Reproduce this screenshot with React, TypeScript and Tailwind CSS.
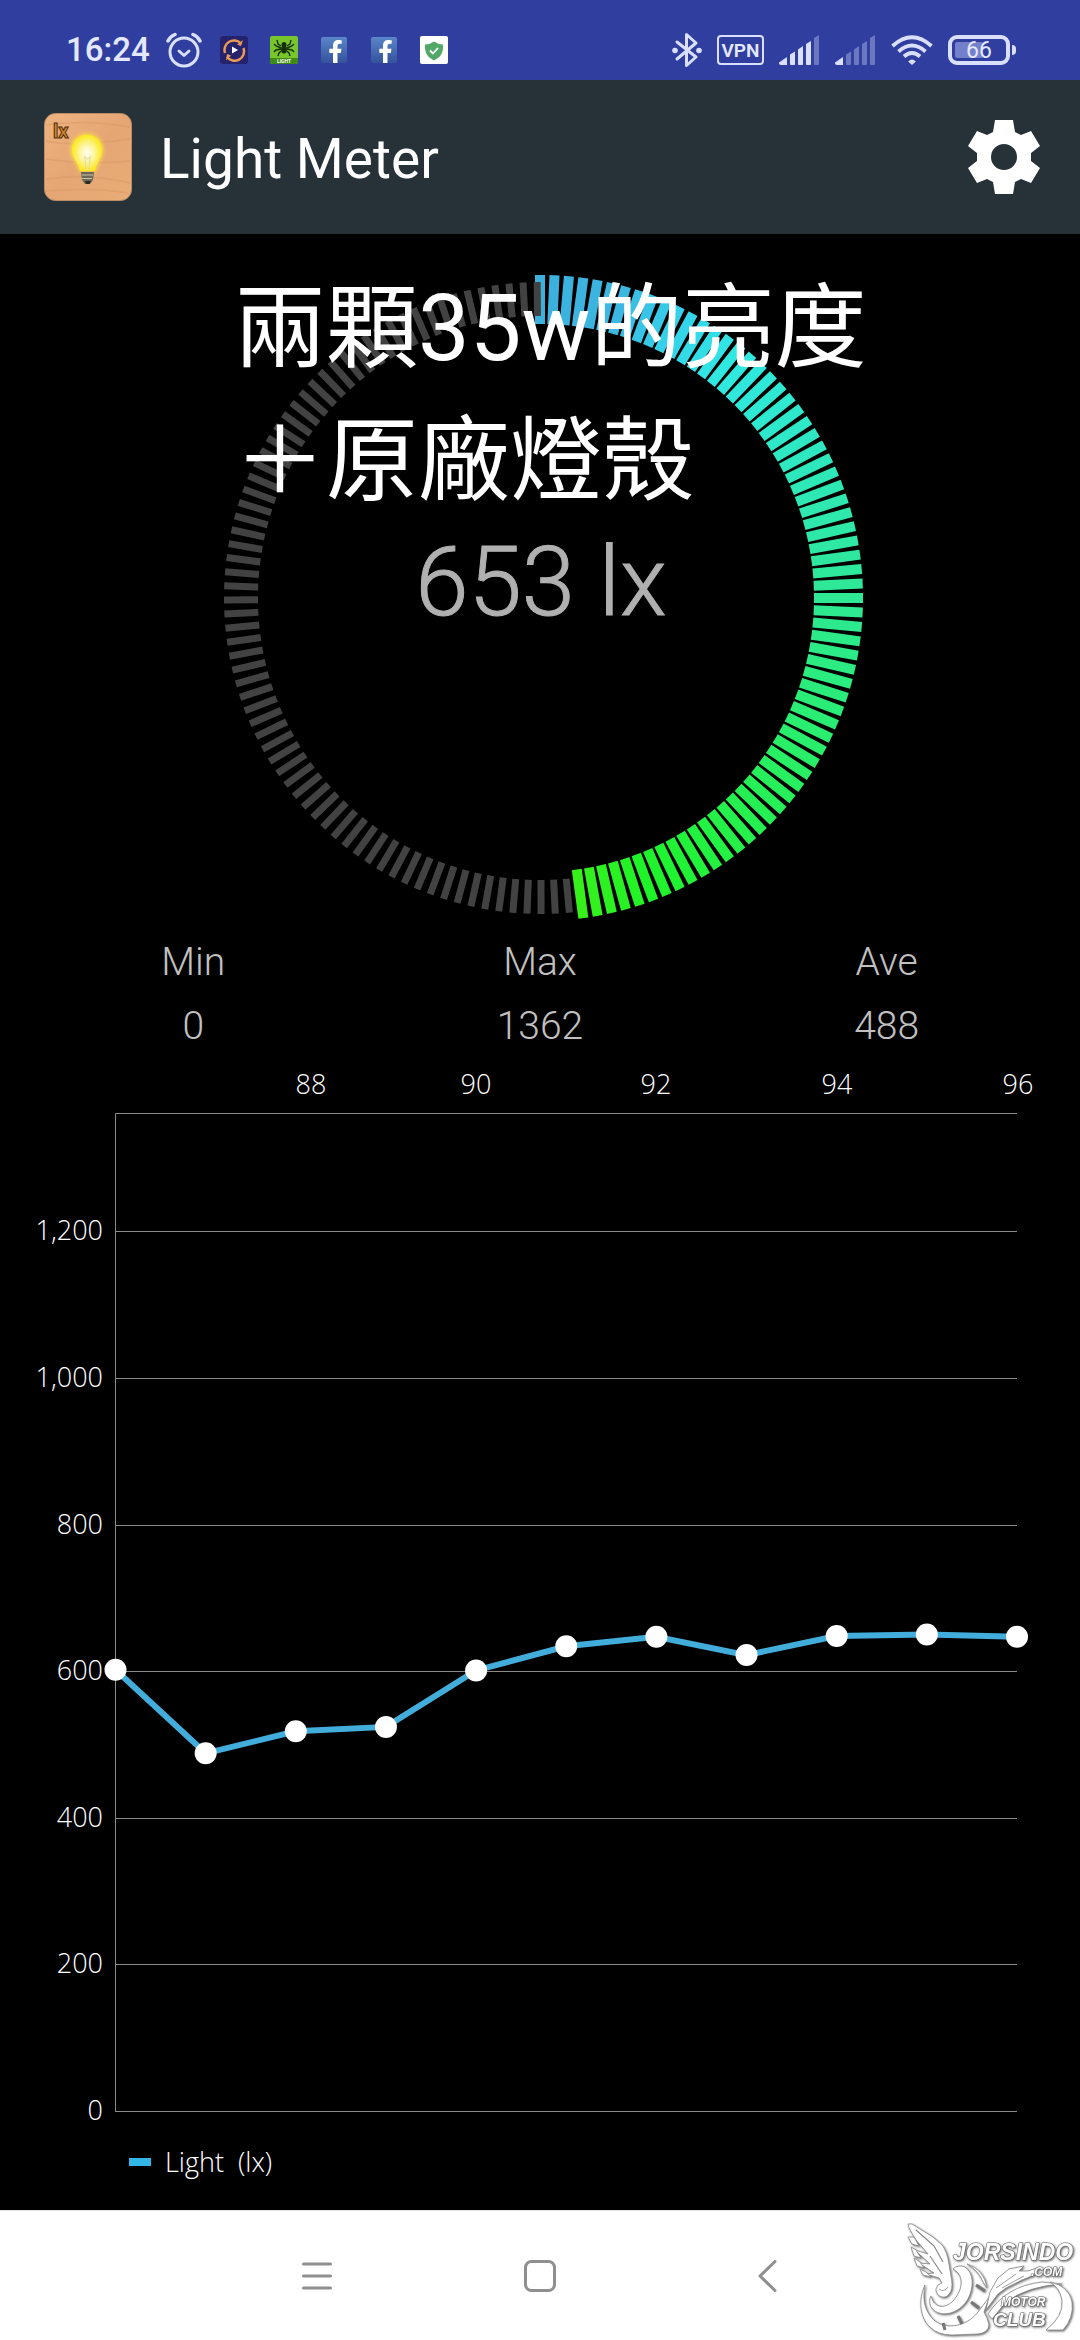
import React from 'react';
import { FaFacebookF } from 'react-icons/fa';

const SEGMENTS = 140;
const ACTIVE_SEGMENTS = 68;

// [segment index, r, g, b]
const GAUGE_STOPS = [
  [0, 61, 176, 220],
  [6, 58, 184, 226],
  [10, 53, 208, 234],
  [15, 48, 232, 226],
  [21, 46, 232, 204],
  [28, 46, 232, 176],
  [35, 46, 232, 148],
  [45, 41, 238, 112],
  [55, 36, 240, 72],
  [62, 31, 244, 40],
  [67, 54, 240, 28],
];

const gaugeColor = (index: number) => {
  const next = Math.max(1, GAUGE_STOPS.findIndex((stop) => stop[0] >= index));
  const a = GAUGE_STOPS[next - 1];
  const b = GAUGE_STOPS[next];
  const t = (index - a[0]) / (b[0] - a[0]);
  const mix = (c: number) => Math.round(a[c] + (b[c] - a[c]) * t);
  return `rgb(${mix(1)}, ${mix(2)}, ${mix(3)})`;
};

const stats = [
  { label: 'Min', value: '0' },
  { label: 'Max', value: '1362' },
  { label: 'Ave', value: '488' },
];

const readings = [602, 488, 518, 524, 601, 634, 647, 622, 648, 650, 647];
const yTicks = [
  { value: 1200, label: '1,200' },
  { value: 1000, label: '1,000' },
  { value: 800, label: '800' },
  { value: 600, label: '600' },
  { value: 400, label: '400' },
  { value: 200, label: '200' },
  { value: 0, label: '0' },
];
const xTicks = [
  { x: 311, label: '88' },
  { x: 476, label: '90' },
  { x: 656, label: '92' },
  { x: 837, label: '94' },
  { x: 1018, label: '96' },
];

const SignalIcon = ({ level }: { level: number }) => (
  <svg width="41" height="30" viewBox="0 0 41 30" fill="#d9dffc">
    <path d="M0 27.5 L8 22 V30 H2 Q0 30 0 28Z" />
    <path d="M11 19.5 L16 16.5 V29 Q16 30 15 30 H12 Q11 30 11 29Z" opacity={level > 1 ? 1 : 0.35} />
    <path d="M19 14.5 L24 11 V29 Q24 30 23 30 H20 Q19 30 19 29Z" opacity={level > 2 ? 1 : 0.35} />
    <path d="M27 9 L32 6 V29 Q32 30 31 30 H28 Q27 30 27 29Z" opacity={level > 3 ? 1 : 0.35} />
    <path d="M35 3 L40 0 V29 Q40 30 39 30 H36 Q35 30 35 29Z" opacity={level > 4 ? 1 : 0.35} />
  </svg>
);

const FacebookBadge = () => (
  <div className="flex size-[26px] mx-px items-end justify-end rounded-xs bg-linear-to-b from-[#5b86c9] to-[#34529c]">
    <FaFacebookF size={23} color="#fff" />
  </div>
);

const StatusBar = () => (
  <div className="flex h-20 items-center justify-between bg-[#303f9f] pr-16 pl-[66px] pt-5 text-[#e4e8ff]">
    <div className="flex items-center">
      <span className="text-[33px] leading-9 font-medium">16:24</span>
      <svg className="ml-4" width="36" height="36" viewBox="0 0 36 36" fill="none" stroke="#d9dffc" strokeLinecap="round" strokeLinejoin="round">
        <circle cx="18" cy="20" r="14" strokeWidth="3" />
        <path d="M2 9 Q4 4.500 9 2.500 M34 9 Q32 4.500 27 2.500" strokeWidth="3.500" />
        <path d="M13 19 L18 23.500 L23 19" strokeWidth="3" />
      </svg>
      <div className="ml-[18px] flex items-center gap-[22px]">
        <svg width="28" height="28" viewBox="0 0 28 28" fill="none">
          <rect width="28" height="28" rx="3" fill="#25226e" />
          <path d="M21 7.500 A9.500 9.500 0 0 0 5 17 M7 21 A9.500 9.500 0 0 0 23.500 12" stroke="#eb9a55" strokeWidth="2.500" />
          <path d="M17 8.500 L23 4 L21 10Z M11 19.500 L6 24.500 L7 18Z" fill="#eb9a55" />
          <path d="M12 10.500 L18 14 L12 17.500Z" fill="#fff" />
        </svg>
        <svg width="28" height="28" viewBox="0 0 28 28">
          <rect width="28" height="28" rx="2" fill="#79c62c" />
          <path d="M0 22 H28 V26 Q28 28 26 28 H2 Q0 28 0 26Z" fill="#3f8a14" />
          <ellipse cx="14" cy="8.500" rx="2.500" ry="2.500" fill="#16310a" />
          <ellipse cx="14" cy="13.500" rx="3" ry="4" fill="#16310a" />
          <path
            d="M11 10 L8 8 L7 4 M17 10 L20 8 L21 4 M11 12 L6 10 L4 8 M17 12 L22 10 L24 8 M11 13 L6 14 L4 16 M17 13 L22 14 L24 16 M11 15 L9 17 L8 20 M17 15 L19 17 L20 20"
            fill="none"
            stroke="#16310a"
            strokeWidth="1.400"
          />
          <text x="14" y="27" textAnchor="middle" fill="#fff" className="text-[5px] font-bold">LIGHT</text>
        </svg>
        <FacebookBadge />
        <FacebookBadge />
        <svg width="28" height="28" viewBox="0 0 28 28">
          <rect width="28" height="28" rx="2" fill="#fff" />
          <path d="M14 5.500 Q18 8.500 23 8.500 V13 Q22 21 14 24.500 Q6 21 5 13 V8.500 Q10 8.500 14 5.500Z" fill="#52a866" />
          <path d="M10 14.500 L13 17.500 L18 12" fill="none" stroke="#fff" strokeWidth="1.800" />
        </svg>
      </div>
    </div>

    <div className="flex items-center gap-[15px]">
      <svg width="30" height="36" viewBox="0 0 30 36" fill="none" stroke="#d9dffc" strokeWidth="3" strokeLinejoin="round">
        <path d="M5 10 L24 25 L14.500 33.500 V2.500 L24 11 L5 27" strokeLinecap="round" />
        <circle cx="3" cy="18.500" r="2.800" fill="#d9dffc" stroke="none" />
        <circle cx="27" cy="18.500" r="2.800" fill="#d9dffc" stroke="none" />
      </svg>
      <div className="flex h-[30px] w-[47px] items-center justify-center rounded-sm border-2 border-[#d9dffc] text-[19px] leading-none font-semibold">
        VPN
      </div>
      <SignalIcon level={4} />
      <SignalIcon level={1} />
      <svg width="42" height="30" viewBox="0 0 42 30" fill="none" stroke="#d9dffc" strokeWidth="3.800">
        <path d="M1.500 11 Q21 -6.500 40.500 11" />
        <path d="M7.500 16.500 Q21 4.500 34.500 16.500" />
        <path d="M13 21.500 Q21 14.500 29 21.500" />
        <path d="M21 30 L17.200 26.500 Q21 22.500 24.800 26.500Z" fill="#d9dffc" stroke="none" />
      </svg>
      <div className="flex items-center gap-0.5">
        <div className="relative flex h-[30px] w-[62px] items-center justify-center rounded-[9px] border-4 border-[#d9dffc]">
          <div className="absolute inset-y-[3px] left-[3px] w-7 rounded-xs bg-[#7480cb]"></div>
          <span className="relative text-[23px] leading-none">66</span>
        </div>
        <div className="h-2.5 w-1 rounded-r-sm bg-[#d9dffc]"></div>
      </div>
    </div>
  </div>
);

const AppIcon = () => (
  <svg width="88" height="88" viewBox="0 0 88 88">
    <defs>
      <linearGradient id="wood" x1="0" y1="0" x2="1" y2="1">
        <stop offset="0" stopColor="#eeb380" />
        <stop offset="0.500" stopColor="#e5a674" />
        <stop offset="1" stopColor="#e9ad76" />
      </linearGradient>
      <radialGradient id="glow">
        <stop offset="0" stopColor="#fffef0" />
        <stop offset="0.450" stopColor="#fdf6a8" />
        <stop offset="1" stopColor="#fbe91e" />
      </radialGradient>
      <filter id="halo" x="-40%" y="-40%" width="180%" height="180%">
        <feGaussianBlur stdDeviation="2" />
      </filter>
    </defs>
    <rect x="0.500" y="0.500" width="87" height="87" rx="11" fill="url(#wood)" stroke="#b98d68" />
    <path d="M2 12 Q40 6 86 14 M2 28 Q30 34 86 26 M2 46 Q40 52 86 48 M2 66 Q44 60 86 70 M2 78 Q50 74 84 80" fill="none" stroke="#d99763" strokeWidth="1.500" opacity="0.500" />
    <text x="9" y="25" fill="#d98a2b" stroke="#4a2c10" strokeWidth="1" className="text-[20px] font-bold">lx</text>
    <path d="M43 21 C52 21 59 28 59 37 C59 45 53 49 52 58 H35 C34 49 27 45 27 37 C27 28 34 21 43 21Z" fill="#ffe93b" filter="url(#halo)" />
    <path d="M43 22 C52 22 58 29 58 37 C58 46 52 49 51 58 H36 C35 49 28 46 28 37 C28 29 34 22 43 22Z" fill="url(#glow)" />
    <path d="M41 44 L42 57 M46 44 L45 57 M40 43 L43.500 46 L47 43" fill="none" stroke="#e0d8a8" strokeWidth="1" />
    <path d="M37 59 H50 L49 67 L46 71 H41 L38 67Z" fill="#6f6a58" />
    <path d="M38 62 H49 M38 65.500 H48" stroke="#c8c1a6" strokeWidth="1.200" />
    <path d="M41 68 H47 L45.500 71 H42Z" fill="#2d2a26" />
  </svg>
);

const Header = () => (
  <header className="flex h-[154px] items-center bg-[#273238] pr-10 pl-11">
    <AppIcon />
    <h1 className="ml-7 flex-1 pt-1 text-[55px] leading-16 text-white">Light Meter</h1>
    <button type="button" aria-label="Settings">
      <svg width="72" height="74" viewBox="0 0 72 74" fill="#fff">
        <path
          fillRule="evenodd"
          d="M27 0 H45 L47 12 L53 15 L63 11 L72 26 L63 33 V41 L72 48 L63 63 L53 59 L47 62 L45 74 H27 L25 62 L19 59 L9 63 L0 48 L9 41 V33 L0 26 L9 11 L19 15 L25 12Z M36 24 A13 13 0 1 0 36 50 A13 13 0 1 0 36 24Z"
        />
      </svg>
    </button>
  </header>
);

const Gauge = () => (
  <section className="relative">
    <svg className="block w-full" viewBox="0 0 1080 696">
      {Array.from({ length: ACTIVE_SEGMENTS }, (_, i) => (
        <rect
          key={i}
          x="535"
          y="41"
          width="10"
          height="49"
          fill={gaugeColor(i)}
          transform={`rotate(${(i * 360) / SEGMENTS} 540 364)`}
        />
      ))}
      {/* The last idle segment closes the circle on top of the first active one */}
      {Array.from({ length: SEGMENTS - ACTIVE_SEGMENTS + 1 }, (_, i) => (
        <rect
          key={i}
          x="536.500"
          y="48"
          width="7"
          height="34"
          fill="#424242"
          transform={`rotate(${179.8 + (i + ACTIVE_SEGMENTS - 70) * 2.567} 540 364)`}
        />
      ))}
      <text x="541" y="381" textAnchor="middle" fill="#b0b0b0" stroke="#b0b0b0" className="text-[96px] font-light">
        653 lx
      </text>
    </svg>
    <div className="absolute inset-0 pt-7 pl-[234px] text-[92px] leading-[133px] whitespace-nowrap text-white">
      <p>兩顆35w的亮度</p>
      <p>＋原廠燈殼</p>
    </div>
  </section>
);

const Stats = () => (
  <dl className="grid grid-cols-3 px-5 text-center text-[39px] leading-[64px] font-light text-[#c0c0c0]">
    {stats.map((stat) => (
      <div key={stat.label}>
        <dt>{stat.label}</dt>
        <dd>{stat.value}</dd>
      </div>
    ))}
  </dl>
);

const toY = (value: number) => 1053 - value * 0.733;
const toX = (index: number) => 115.5 + index * 90.15;

const Chart = () => (
  <svg
    className="block w-full font-['Open_Sans',sans-serif] text-[27px] font-light"
    viewBox="0 0 1080 1152"
    fill="#fff"
  >
    {xTicks.map((tick) => (
      <text key={tick.label} x={tick.x} y="36" textAnchor="middle">{tick.label}</text>
    ))}
    {yTicks.map((tick) => (
      <g key={tick.label}>
        <text x="103" y={Math.round(toY(tick.value)) + 9} textAnchor="end">{tick.label}</text>
        <path d={`M115 ${Math.round(toY(tick.value)) + 0.5} H1017`} stroke="#8a8a8a" />
      </g>
    ))}
    <path d="M1017 55.500 H115.500 V1053.500" fill="none" stroke="#8a8a8a" />
    <polyline
      points={readings.map((value, i) => `${toX(i)},${toY(value)}`).join(' ')}
      fill="none"
      stroke="#42addb"
      strokeWidth="6"
    />
    {readings.map((value, i) => (
      <circle key={i} cx={toX(i)} cy={toY(value)} r="11" />
    ))}
    <rect x="129" y="1100" width="22" height="8" fill="#33b5e5" />
    <text x="165" y="1114" className="whitespace-pre">{'Light  (lx)'}</text>
  </svg>
);

const Watermark = () => (
  <svg
    className="absolute right-1 bottom-0 drop-shadow-[1px_1px_1px_rgba(0,0,0,0.6)]"
    width="170"
    height="120"
    viewBox="0 0 170 120"
    fill="#fff"
    stroke="#888"
    strokeWidth="0.800"
    strokeLinejoin="round"
  >
    {/* Wing */}
    <path d="M3 8 L2 4 L6 4 L27 17 L36 25 Q41 31 43 44 L45 56 Q47 66 45 71 Q42 78 36 77 Q30 75 30 69 Q31 64 36 63 L33 58 L20 54 L28 53 L13 43 L24 44 L9 30 L22 34 L10 20Z" />
    <path d="M2 17 L8 17 L13 26 L6 24Z M5 27 L10 30 L15 38 L8 36Z M8 38 L14 42 L18 48 L11 46Z M14 49 L20 52 L25 57 L17 55Z" />
    <path d="M10 10 L28 26 L37 42 M24 36 L36 54" fill="none" strokeWidth="1.200" />
    <path d="M33 69 Q38 73 42 67" fill="none" />
    {/* Wheel */}
    <path d="M47 49 Q52 44 59 47 C68 53 68 67 62 79 C55 91 42 96 33 93 C24 90 22 82 25 76 C28 88 38 89 46 82 C56 72 60 56 47 49Z" />
    <path d="M19 65 C12 80 14 98 24 107 Q32 115 46 115 L72 114 Q82 113 83 105 Q82 99 78 92 L83 78 L94 72 L88 70 Q80 82 72 92 C60 108 36 111 25 97 C17 87 17 76 19 65Z" />
    <path d="M61 44 Q78 49 81 68 L77 62 Q73 51 61 44Z" />
    <path d="M37 103 L39 110 M52 96 L56 104 M65 82 L73 88 M70 65 L79 71" fill="none" stroke="#777" strokeWidth="3" />
    {/* Branch and tail */}
    <path d="M80 90 L84 72 L92 58 L103 49 L118 46 L113 51 L122 51 L134 47 L128 55 L116 60 L100 68 L92 74Z" />
    <path d="M90 68 L110 54 M96 68 L118 56" fill="none" />
    <path d="M82 94 Q100 66 136 62 L156 64 Q122 66 100 82 L86 99Z" />
    <path d="M144 62 Q163 66 166 82 Q168 98 157 110 L140 110 Q158 96 156 80 Q154 68 144 62Z" />
    <g className="font-['Liberation_Sans',sans-serif] font-bold italic" stroke="#666" strokeWidth="1.200" paintOrder="stroke">
      <text x="47" y="40" className="text-[23px]">JORSINDO</text>
      <text x="125" y="56" className="text-[12px]">.COM</text>
      <text x="95" y="86" className="text-[12px]">MOTOR</text>
      <text x="87" y="106" className="text-[19px]">CLUB</text>
    </g>
  </svg>
);

const NavBar = () => (
  <nav className="relative mt-auto flex h-[130px] items-center justify-center gap-48 border-t border-[#e2e2e2] bg-white">
    <button type="button" aria-label="Recent apps">
      <svg width="30" height="32" viewBox="0 0 30 32" stroke="#8f8f8f" strokeWidth="3" strokeLinecap="round">
        <path d="M1.500 4 H28.500 M1.500 16 H28.500 M1.500 28 H28.500" />
      </svg>
    </button>
    <button type="button" aria-label="Home">
      <svg width="32" height="32" viewBox="0 0 32 32" fill="none" stroke="#8f8f8f" strokeWidth="3">
        <rect x="1.500" y="1.500" width="29" height="29" rx="6" />
      </svg>
    </button>
    <button type="button" aria-label="Back">
      <svg width="30" height="32" viewBox="0 0 30 32" fill="none" stroke="#8f8f8f" strokeWidth="3" strokeLinecap="round" strokeLinejoin="round">
        <path d="M27 1.500 L12 16 L27 30.500" />
      </svg>
    </button>
    <Watermark />
  </nav>
);

export default function App() {
  return (
    <div className="flex min-h-screen flex-col bg-black font-[Roboto,'Noto_Sans_CJK_TC',sans-serif]">
      <StatusBar />
      <Header />
      <main>
        <Gauge />
        <Stats />
        <Chart />
      </main>
      <NavBar />
    </div>
  );
}
